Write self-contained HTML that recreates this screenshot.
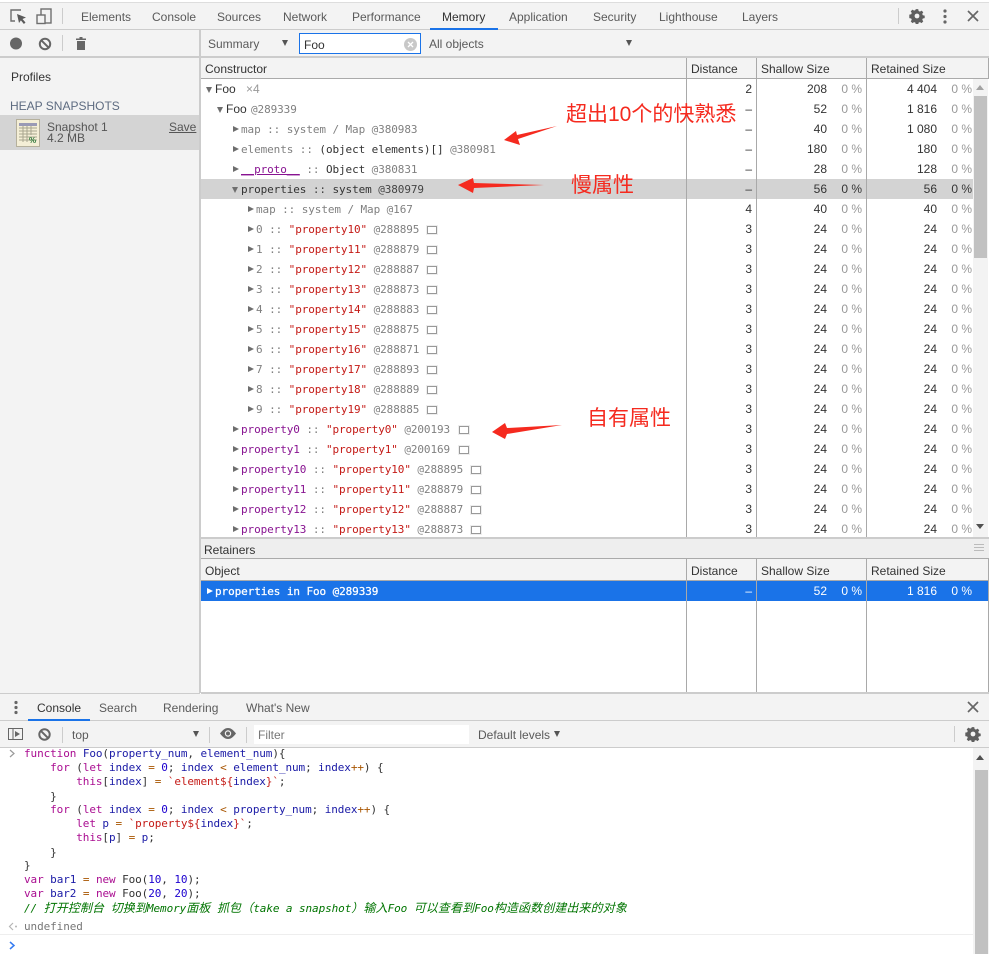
<!DOCTYPE html>
<html><head><meta charset="utf-8"><title>Memory</title>
<style>
html,body{margin:0;padding:0;background:#fff}
#p{position:relative;width:989px;height:954px;overflow:hidden;background:#fff;font:12px "Liberation Sans","Noto Sans CJK SC",sans-serif;color:#333}
.a{position:absolute}
.t{position:absolute;white-space:nowrap;line-height:16px;color:#5a5a5a}
.r{position:absolute;left:201px;width:772px;height:20px;overflow:hidden;line-height:20px;color:#333}
.r b{font-weight:400;position:absolute;white-space:nowrap}
.n{position:absolute;top:1px;white-space:pre;font:11px/20px "DejaVu Sans Mono","Noto Sans CJK SC",monospace;letter-spacing:-.09px;color:#808080}
.d{right:221px}.s{right:146px}.sp{right:111px;color:#999}.k{right:36px}.kp{right:1px;color:#999}
.i{position:absolute;top:7px;width:0;height:0;border-left:6px solid #6e6e6e;border-top:3.5px solid transparent;border-bottom:3.5px solid transparent}
.o{position:absolute;top:8px;width:0;height:0;border-top:6px solid #6e6e6e;border-left:3.5px solid transparent;border-right:3.5px solid transparent}
.m{position:absolute;top:7px;width:8px;height:6px;border:1px solid #999;box-shadow:0 0 0 1px #eee}
.u{color:#881391}.q{color:#c41a16}.c{color:#333}
.v{position:absolute;width:1px;background:#a9a9a9}
.h{position:absolute;background:#ccc}
.l{position:absolute;left:24px;margin-top:1px;white-space:pre;font:11px/14px "DejaVu Sans Mono","Noto Sans CJK SC",monospace;letter-spacing:-.09px;color:#333}
.l em{font-size:12px;letter-spacing:.1px}
.w{color:#aa0d91}.b{color:#1a1aa6}.e{color:#a85500}.g{color:#c41a16}.z{color:#1c00cf}
.cn{position:absolute;white-space:nowrap;color:#f52a1f;font-size:21px;line-height:26px}
</style></head><body><div id="p">

<!-- top tabs -->
<div class="a" style="left:0;top:0;width:989px;height:2px;background:#fff"></div>
<div class="a" style="left:0;top:2px;width:989px;height:28px;background:#f3f3f3;border-top:1px solid #ddd;border-bottom:1px solid #ccc;box-sizing:border-box"></div>
<svg class="a" style="left:8px;top:7px" width="46" height="20" viewBox="0 0 46 20" fill="none"><path d="M13 3H3v11h4" stroke="#6e6e6e" stroke-width="1.4"/><path d="M9 7l9 3.5-3.5 1.5 3 3.5-1.6 1.5-3-3.6L11 16z" fill="#5a5a5a"/><rect x="33" y="2" width="10" height="14" stroke="#6e6e6e" stroke-width="1.4"/><rect x="29" y="8" width="8" height="8.500" fill="#f3f3f3" stroke="#6e6e6e" stroke-width="1.400"/></svg>
<div class="a" style="left:62px;top:8px;width:1px;height:16px;background:#ccc"></div>
<span class="t" style="left:81px;top:9px">Elements</span>
<span class="t" style="left:152px;top:9px">Console</span>
<span class="t" style="left:217px;top:9px">Sources</span>
<span class="t" style="left:283px;top:9px">Network</span>
<span class="t" style="left:352px;top:9px">Performance</span>
<span class="t" style="left:442px;top:9px;color:#333">Memory</span>
<div class="a" style="left:430px;top:28px;width:68px;height:2px;background:#1a73e8"></div>
<span class="t" style="left:509px;top:9px">Application</span>
<span class="t" style="left:593px;top:9px">Security</span>
<span class="t" style="left:659px;top:9px">Lighthouse</span>
<span class="t" style="left:742px;top:9px">Layers</span>
<div class="a" style="left:898px;top:8px;width:1px;height:16px;background:#ccc"></div>
<svg class="a" style="left:909px;top:8px" width="16" height="16" viewBox="0 0 16 16"><path d="M6.700 1h2.600l.4 2 1.400.6 1.700-1.100 1.800 1.800-1.100 1.700.6 1.400 2 .4v2.600l-2 .4-.6 1.400 1.100 1.700-1.800 1.800-1.700-1.100-1.400.6-.4 2H6.700l-.4-2-1.400-.6-1.700 1.100-1.800-1.800 1.100-1.700-.6-1.400-2-.4V6.800l2-.4.6-1.400-1.100-1.700 1.800-1.800 1.700 1.100 1.400-.6z" transform="translate(.4 .2) scale(.95)" fill="#5f5f5f"/><circle cx="8" cy="8" r="2.400" fill="#f3f3f3"/></svg>
<svg class="a" style="left:942px;top:8px" width="6" height="16"><circle cx="3" cy="3" r="1.600" fill="#666"/><circle cx="3" cy="8.500" r="1.600" fill="#666"/><circle cx="3" cy="14" r="1.600" fill="#666"/></svg>
<svg class="a" style="left:967px;top:10px" width="12" height="12"><path d="M1 1l10 10M11 1L1 11" stroke="#666" stroke-width="1.700"/></svg>

<!-- second toolbar -->
<div class="a" style="left:0;top:30px;width:989px;height:26px;background:#f3f3f3"></div>
<div class="a" style="left:0;top:56px;width:989px;height:2px;background:#ccc"></div>
<svg class="a" style="left:9px;top:37px" width="46" height="14"><circle cx="7" cy="6.500" r="6" fill="#666"/><circle cx="36" cy="7" r="5.200" fill="none" stroke="#666" stroke-width="2"/><path d="M32.300 3.300l7.400 7.400" stroke="#666" stroke-width="2"/></svg>
<div class="a" style="left:62px;top:35px;width:1px;height:16px;background:#ccc"></div>
<svg class="a" style="left:75px;top:36px" width="13" height="15"><path d="M4.500 1h3v1.500H11V4H1V2.500h3.500zM2 5h8v9H2z" fill="#666"/></svg>
<span class="t" style="left:208px;top:36px">Summary</span>
<div class="a" style="left:282px;top:40px;border-top:6px solid #555;border-left:3.500px solid transparent;border-right:3.500px solid transparent"></div>
<div class="a" style="left:299px;top:33px;width:122px;height:21px;box-sizing:border-box;background:#fff;border:1px solid #1a73e8"></div>
<span class="t" style="left:304px;top:37px;color:#333">Foo</span>
<svg class="a" style="left:404px;top:38px" width="13" height="13"><circle cx="6.500" cy="6.500" r="6.500" fill="#c8c8c8"/><path d="M4 4l5 5M9 4l-5 5" stroke="#fff" stroke-width="1.300"/></svg>
<span class="t" style="left:429px;top:36px">All objects</span>
<div class="a" style="left:626px;top:40px;border-top:6px solid #555;border-left:3.500px solid transparent;border-right:3.500px solid transparent"></div>

<!-- sidebar -->
<div class="a" style="left:0;top:58px;width:199px;height:635px;background:#f3f3f3"></div>
<div class="a" style="left:199px;top:30px;width:2px;height:663px;background:#ccc"></div>
<span class="t" style="left:11px;top:69px;color:#333">Profiles</span>
<span class="t" style="left:10px;top:98px;color:#5d6b80">HEAP SNAPSHOTS</span>
<div class="a" style="left:0;top:115px;width:199px;height:35px;background:#d4d4d4"></div>
<svg class="a" style="left:16px;top:119px" width="24" height="28"><rect x=".5" y=".5" width="23" height="27" fill="#f4eed6" stroke="#b5b09c"/><path d="M3 4h18v3H3z" fill="#9a9ab5"/><path d="M3 9h18M3 12h18M3 15h18M3 18h18M3 21h18M7 7v16M11 7v16M15 7v9" stroke="#a8a58f"/><text x="13" y="24" font-size="8" font-family="Liberation Sans" fill="#2f7a3b" font-weight="700">%</text></svg>
<span class="t" style="left:47px;top:121px;line-height:13px;color:#555">Snapshot 1</span>
<span class="t" style="left:47px;top:132px;line-height:13px;color:#555">4.2 MB</span>
<span class="t" style="left:169px;top:121px;line-height:13px;color:#555;text-decoration:underline">Save</span>

<!-- table header -->
<div class="a" style="left:201px;top:58px;width:788px;height:21px;background:#f3f3f3;border-bottom:1px solid #aaa;box-sizing:border-box"></div>
<span class="t" style="left:205px;top:61px;color:#333">Constructor</span>
<span class="t" style="left:691px;top:61px;color:#333">Distance</span>
<span class="t" style="left:761px;top:61px;color:#333">Shallow Size</span>
<span class="t" style="left:871px;top:61px;color:#333">Retained Size</span>

<!-- rows -->
<div class="a" style="left:201px;top:179px;width:772px;height:20px;background:#d3d3d3"></div>

<div class="r" style="top:79px"><i class="o" style="left:5px"></i><b style="left:14px">Foo</b><b style="left:45px;color:#999">×4</b><b class="d">2</b><b class="s">208</b><b class="sp">0 %</b><b class="k">4 404</b><b class="kp">0 %</b></div>
<div class="r" style="top:99px"><i class="o" style="left:16px"></i><b style="left:25px">Foo</b><span class="n" style="left:50px">@289339</span><b class="d">–</b><b class="s">52</b><b class="sp">0 %</b><b class="k">1 816</b><b class="kp">0 %</b></div>
<div class="r" style="top:119px"><i class="i" style="left:32px"></i><span class="n" style="left:40px">map :: system / Map @380983</span><b class="d">–</b><b class="s">40</b><b class="sp">0 %</b><b class="k">1 080</b><b class="kp">0 %</b></div>
<div class="r" style="top:139px"><i class="i" style="left:32px"></i><span class="n" style="left:40px">elements :: <span class="c">(object elements)[]</span> @380981</span><b class="d">–</b><b class="s">180</b><b class="sp">0 %</b><b class="k">180</b><b class="kp">0 %</b></div>
<div class="r" style="top:159px"><i class="i" style="left:32px"></i><span class="n" style="left:40px"><span class="u" style="text-decoration:underline">__proto__</span> :: <span class="c">Object</span> @380831</span><b class="d">–</b><b class="s">28</b><b class="sp">0 %</b><b class="k">128</b><b class="kp">0 %</b></div>
<div class="r" style="top:179px"><i class="o" style="left:31px"></i><span class="n" style="left:40px;color:#444"><span class="c">properties</span> :: <span class="c">system</span> @380979</span><b class="d">–</b><b class="s">56</b><b class="sp" style="color:#333">0 %</b><b class="k">56</b><b class="kp" style="color:#333">0 %</b></div>
<div class="r" style="top:199px"><i class="i" style="left:47px"></i><span class="n" style="left:55px">map :: system / Map @167</span><b class="d">4</b><b class="s">40</b><b class="sp">0 %</b><b class="k">40</b><b class="kp">0 %</b></div>
<div class="r" style="top:219px"><i class="i" style="left:47px"></i><span class="n" style="left:55px">0 :: <span class="q">"property10"</span> @288895</span><i class="m" style="left:226px"></i><b class="d">3</b><b class="s">24</b><b class="sp">0 %</b><b class="k">24</b><b class="kp">0 %</b></div>
<div class="r" style="top:239px"><i class="i" style="left:47px"></i><span class="n" style="left:55px">1 :: <span class="q">"property11"</span> @288879</span><i class="m" style="left:226px"></i><b class="d">3</b><b class="s">24</b><b class="sp">0 %</b><b class="k">24</b><b class="kp">0 %</b></div>
<div class="r" style="top:259px"><i class="i" style="left:47px"></i><span class="n" style="left:55px">2 :: <span class="q">"property12"</span> @288887</span><i class="m" style="left:226px"></i><b class="d">3</b><b class="s">24</b><b class="sp">0 %</b><b class="k">24</b><b class="kp">0 %</b></div>
<div class="r" style="top:279px"><i class="i" style="left:47px"></i><span class="n" style="left:55px">3 :: <span class="q">"property13"</span> @288873</span><i class="m" style="left:226px"></i><b class="d">3</b><b class="s">24</b><b class="sp">0 %</b><b class="k">24</b><b class="kp">0 %</b></div>
<div class="r" style="top:299px"><i class="i" style="left:47px"></i><span class="n" style="left:55px">4 :: <span class="q">"property14"</span> @288883</span><i class="m" style="left:226px"></i><b class="d">3</b><b class="s">24</b><b class="sp">0 %</b><b class="k">24</b><b class="kp">0 %</b></div>
<div class="r" style="top:319px"><i class="i" style="left:47px"></i><span class="n" style="left:55px">5 :: <span class="q">"property15"</span> @288875</span><i class="m" style="left:226px"></i><b class="d">3</b><b class="s">24</b><b class="sp">0 %</b><b class="k">24</b><b class="kp">0 %</b></div>
<div class="r" style="top:339px"><i class="i" style="left:47px"></i><span class="n" style="left:55px">6 :: <span class="q">"property16"</span> @288871</span><i class="m" style="left:226px"></i><b class="d">3</b><b class="s">24</b><b class="sp">0 %</b><b class="k">24</b><b class="kp">0 %</b></div>
<div class="r" style="top:359px"><i class="i" style="left:47px"></i><span class="n" style="left:55px">7 :: <span class="q">"property17"</span> @288893</span><i class="m" style="left:226px"></i><b class="d">3</b><b class="s">24</b><b class="sp">0 %</b><b class="k">24</b><b class="kp">0 %</b></div>
<div class="r" style="top:379px"><i class="i" style="left:47px"></i><span class="n" style="left:55px">8 :: <span class="q">"property18"</span> @288889</span><i class="m" style="left:226px"></i><b class="d">3</b><b class="s">24</b><b class="sp">0 %</b><b class="k">24</b><b class="kp">0 %</b></div>
<div class="r" style="top:399px"><i class="i" style="left:47px"></i><span class="n" style="left:55px">9 :: <span class="q">"property19"</span> @288885</span><i class="m" style="left:226px"></i><b class="d">3</b><b class="s">24</b><b class="sp">0 %</b><b class="k">24</b><b class="kp">0 %</b></div>
<div class="r" style="top:419px"><i class="i" style="left:32px"></i><span class="n" style="left:40px"><span class="u">property0</span> :: <span class="q">"property0"</span> @200193</span><i class="m" style="left:258px"></i><b class="d">3</b><b class="s">24</b><b class="sp">0 %</b><b class="k">24</b><b class="kp">0 %</b></div>
<div class="r" style="top:439px"><i class="i" style="left:32px"></i><span class="n" style="left:40px"><span class="u">property1</span> :: <span class="q">"property1"</span> @200169</span><i class="m" style="left:258px"></i><b class="d">3</b><b class="s">24</b><b class="sp">0 %</b><b class="k">24</b><b class="kp">0 %</b></div>
<div class="r" style="top:459px"><i class="i" style="left:32px"></i><span class="n" style="left:40px"><span class="u">property10</span> :: <span class="q">"property10"</span> @288895</span><i class="m" style="left:270px"></i><b class="d">3</b><b class="s">24</b><b class="sp">0 %</b><b class="k">24</b><b class="kp">0 %</b></div>
<div class="r" style="top:479px"><i class="i" style="left:32px"></i><span class="n" style="left:40px"><span class="u">property11</span> :: <span class="q">"property11"</span> @288879</span><i class="m" style="left:270px"></i><b class="d">3</b><b class="s">24</b><b class="sp">0 %</b><b class="k">24</b><b class="kp">0 %</b></div>
<div class="r" style="top:499px"><i class="i" style="left:32px"></i><span class="n" style="left:40px"><span class="u">property12</span> :: <span class="q">"property12"</span> @288887</span><i class="m" style="left:270px"></i><b class="d">3</b><b class="s">24</b><b class="sp">0 %</b><b class="k">24</b><b class="kp">0 %</b></div>
<div class="r" style="top:519px;height:18px"><i class="i" style="left:32px"></i><span class="n" style="left:40px"><span class="u">property13</span> :: <span class="q">"property13"</span> @288873</span><i class="m" style="left:270px"></i><b class="d">3</b><b class="s">24</b><b class="sp">0 %</b><b class="k">24</b><b class="kp">0 %</b></div>

<!-- column lines top -->
<div class="v" style="left:686px;top:58px;height:479px"></div>
<div class="v" style="left:756px;top:58px;height:479px"></div>
<div class="v" style="left:866px;top:58px;height:479px"></div>
<div class="v" style="left:988px;top:58px;height:21px"></div>

<!-- scrollbar top -->
<div class="a" style="left:973px;top:79px;width:15px;height:458px;background:#f3f3f3"></div>
<div class="a" style="left:974px;top:96px;width:13px;height:162px;background:#c1c1c1"></div>
<div class="a" style="left:976px;top:85px;border-bottom:5px solid #a3a3a3;border-left:4px solid transparent;border-right:4px solid transparent"></div>
<div class="a" style="left:976px;top:524px;border-top:5px solid #505050;border-left:4px solid transparent;border-right:4px solid transparent"></div>

<!-- retainers -->
<div class="a" style="left:201px;top:537px;width:788px;height:22px;background:#eee;border-top:2px solid #ccc;border-bottom:1px solid #aaa;box-sizing:border-box"></div>
<span class="t" style="left:204px;top:542px;color:#333">Retainers</span>
<div class="a" style="left:974px;top:544px;width:10px;height:1px;background:#bbb;box-shadow:0 3px 0 #bbb,0 6px 0 #bbb"></div>
<div class="a" style="left:201px;top:559px;width:788px;height:22px;background:#f3f3f3;border-bottom:1px solid #aaa;box-sizing:border-box"></div>
<span class="t" style="left:205px;top:563px;color:#333">Object</span>
<span class="t" style="left:691px;top:563px;color:#333">Distance</span>
<span class="t" style="left:761px;top:563px;color:#333">Shallow Size</span>
<span class="t" style="left:871px;top:563px;color:#333">Retained Size</span>
<div class="r" style="top:581px;width:788px;background:#1a73e8;color:#fff"><i class="i" style="left:6px;border-left-color:#fff"></i><span class="n" style="left:14px;color:#fff;-webkit-text-stroke:.25px #fff">properties in Foo @289339</span><b class="d" style="right:237px">–</b><b class="s" style="right:162px">52</b><b class="sp" style="right:127px;color:#fff">0 %</b><b class="k" style="right:52px">1 816</b><b class="kp" style="right:17px;color:#fff">0 %</b></div>
<div class="v" style="left:686px;top:559px;height:133px"></div>
<div class="v" style="left:756px;top:559px;height:133px"></div>
<div class="v" style="left:866px;top:559px;height:133px"></div>
<div class="v" style="left:988px;top:559px;height:133px"></div>
<div class="a" style="left:201px;top:692px;width:788px;height:2px;background:#ccc"></div>

<!-- red annotations -->
<svg class="a" style="left:0;top:0" width="989" height="954"><path d="M557 126L517 135 516 131 504 140 520 145 518 139z" fill="#f52a1f"/><path d="M458 185L473 178 474 183 544 185 474 188 473 193z" fill="#f52a1f"/><path d="M492 432L505 423 507 428 562 425 507 434 505 439z" fill="#f52a1f"/></svg>
<span class="cn" style="left:566px;top:102px">超出10个的快熟悉</span>
<span class="cn" style="left:571px;top:173px">慢属性</span>
<span class="cn" style="left:587px;top:406px">自有属性</span>

<!-- drawer -->
<div class="a" style="left:0;top:693px;width:200px;height:1px;background:#ccc"></div>
<div class="a" style="left:0;top:694px;width:989px;height:27px;background:#f3f3f3;border-bottom:1px solid #ccc;box-sizing:border-box"></div>
<svg class="a" style="left:13px;top:700px" width="6" height="15"><circle cx="3" cy="2.500" r="1.600" fill="#666"/><circle cx="3" cy="7.500" r="1.600" fill="#666"/><circle cx="3" cy="12.500" r="1.600" fill="#666"/></svg>
<span class="t" style="left:37px;top:700px;color:#333">Console</span>
<div class="a" style="left:28px;top:719px;width:62px;height:2px;background:#1a73e8"></div>
<span class="t" style="left:99px;top:700px">Search</span>
<span class="t" style="left:163px;top:700px">Rendering</span>
<span class="t" style="left:246px;top:700px">What's New</span>
<svg class="a" style="left:967px;top:701px" width="12" height="12"><path d="M1 1l10 10M11 1L1 11" stroke="#666" stroke-width="1.700"/></svg>

<div class="a" style="left:0;top:721px;width:989px;height:27px;background:#f3f3f3;border-bottom:1px solid #ccc;box-sizing:border-box"></div>
<svg class="a" style="left:8px;top:727px" width="16" height="14" fill="none"><rect x=".5" y="1.500" width="14" height="11" stroke="#666"/><path d="M5 2v10" stroke="#666"/><path d="M7 4l5 3-5 3z" fill="#666"/></svg>
<svg class="a" style="left:38px;top:728px" width="14" height="14"><circle cx="6.500" cy="6.500" r="5.200" fill="none" stroke="#666" stroke-width="2"/><path d="M2.800 2.800l7.400 7.400" stroke="#666" stroke-width="2"/></svg>
<div class="a" style="left:62px;top:727px;width:1px;height:16px;background:#ccc"></div>
<span class="t" style="left:72px;top:727px">top</span>
<div class="a" style="left:193px;top:731px;border-top:6px solid #555;border-left:3.500px solid transparent;border-right:3.500px solid transparent"></div>
<div class="a" style="left:209px;top:727px;width:1px;height:16px;background:#ccc"></div>
<svg class="a" style="left:220px;top:728px" width="16" height="11"><path d="M0 5.500C3 1.500 5.500 0 8 0s5 1.500 8 5.500C13 9.500 10.500 11 8 11S3 9.500 0 5.500z" fill="#666"/><circle cx="8" cy="5.500" r="3.200" fill="#f3f3f3"/><circle cx="8" cy="5.500" r="2" fill="#666"/></svg>
<div class="a" style="left:246px;top:727px;width:1px;height:16px;background:#ccc"></div>
<div class="a" style="left:254px;top:725px;width:215px;height:19px;background:#fff"></div>
<span class="t" style="left:258px;top:727px;color:#777">Filter</span>
<span class="t" style="left:478px;top:727px">Default levels</span>
<div class="a" style="left:554px;top:731px;border-top:6px solid #555;border-left:3.500px solid transparent;border-right:3.500px solid transparent"></div>
<div class="a" style="left:954px;top:726px;width:1px;height:16px;background:#ccc"></div>
<svg class="a" style="left:965px;top:726px" width="16" height="16" viewBox="0 0 16 16"><path d="M6.700 1h2.600l.4 2 1.400.6 1.700-1.100 1.800 1.800-1.100 1.700.6 1.400 2 .4v2.600l-2 .4-.6 1.400 1.100 1.700-1.800 1.800-1.700-1.100-1.400.6-.4 2H6.700l-.4-2-1.400-.6-1.700 1.100-1.800-1.800 1.100-1.700-.6-1.400-2-.4V6.800l2-.4.6-1.400-1.100-1.700 1.800-1.800 1.700 1.100 1.400-.6z" transform="translate(.4 .2) scale(.95)" fill="#5f5f5f"/><circle cx="8" cy="8" r="2.400" fill="#f3f3f3"/></svg>

<!-- console -->
<svg class="a" style="left:8px;top:749px" width="8" height="9" fill="none"><path d="M2 1l4 3.500L2 8" stroke="#9a9a9a" stroke-width="1.200"/></svg>
<div class="l" style="top:746px"><span class="w">function</span> <span class="b">Foo</span>(<span class="b">property_num</span>, <span class="b">element_num</span>){</div>
<div class="l" style="top:760px">    <span class="w">for</span> (<span class="w">let</span> <span class="b">index</span> <span class="e">=</span> <span class="z">0</span>; <span class="b">index</span> <span class="e">&lt;</span> <span class="b">element_num</span>; <span class="b">index</span><span class="e">++</span>) {</div>
<div class="l" style="top:774px">        <span class="w">this</span>[<span class="b">index</span>] <span class="e">=</span> <span class="g">`element${</span><span class="b">index</span><span class="g">}`</span>;</div>
<div class="l" style="top:789px">    }</div>
<div class="l" style="top:802px">    <span class="w">for</span> (<span class="w">let</span> <span class="b">index</span> <span class="e">=</span> <span class="z">0</span>; <span class="b">index</span> <span class="e">&lt;</span> <span class="b">property_num</span>; <span class="b">index</span><span class="e">++</span>) {</div>
<div class="l" style="top:816px">        <span class="w">let</span> <span class="b">p</span> <span class="e">=</span> <span class="g">`property${</span><span class="b">index</span><span class="g">}`</span>;</div>
<div class="l" style="top:830px">        <span class="w">this</span>[<span class="b">p</span>] <span class="e">=</span> <span class="b">p</span>;</div>
<div class="l" style="top:845px">    }</div>
<div class="l" style="top:858px">}</div>
<div class="l" style="top:872px"><span class="w">var</span> <span class="b">bar1</span> <span class="e">=</span> <span class="w">new</span> Foo(<span class="z">10</span>, <span class="z">10</span>);</div>
<div class="l" style="top:886px"><span class="w">var</span> <span class="b">bar2</span> <span class="e">=</span> <span class="w">new</span> Foo(<span class="z">20</span>, <span class="z">20</span>);</div>
<div class="l" style="top:900px;color:#007400;font-style:italic">// <em>打开控制台</em> <em>切换到</em>Memory<em>面板</em> <em>抓包（</em>take a snapshot<em>）输入</em>Foo <em>可以查看到</em>Foo<em>构造函数创建出来的对象</em></div>
<svg class="a" style="left:8px;top:922px" width="10" height="9" fill="none"><path d="M5 1L1.500 4.500 5 8" stroke="#b5b5b5" stroke-width="1.200"/><circle cx="8" cy="4.500" r="1" fill="#b5b5b5"/></svg>
<div class="l" style="top:919px;color:#777">undefined</div>
<div class="a" style="left:0;top:934px;width:973px;height:1px;background:#eee"></div>
<svg class="a" style="left:8px;top:941px" width="8" height="9" fill="none"><path d="M2 1l4 3.500L2 8" stroke="#367cf1" stroke-width="1.500"/></svg>
<div class="a" style="left:973px;top:748px;width:16px;height:206px;background:#f3f3f3"></div>
<div class="a" style="left:975px;top:770px;width:13px;height:184px;background:#c1c1c1"></div>
<div class="a" style="left:976px;top:755px;border-bottom:5px solid #505050;border-left:4px solid transparent;border-right:4px solid transparent"></div>
</div></body></html>
